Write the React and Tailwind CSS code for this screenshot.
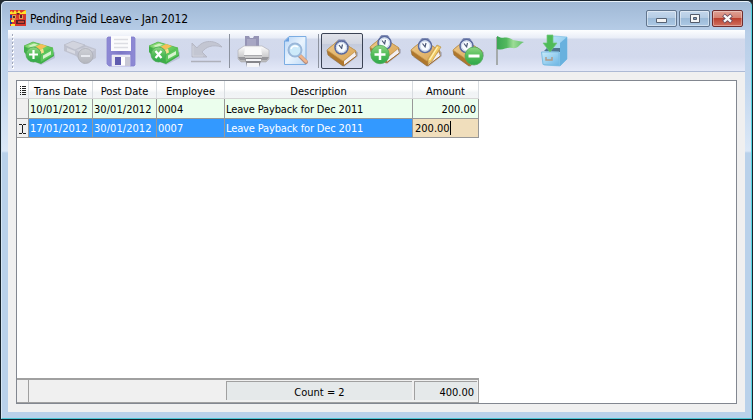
import React from "react";

function Defs() {
  return (
    <svg className="absolute h-0 w-0" aria-hidden="true">
      <defs>
        <linearGradient id="green" x1="0" y1="0" x2="1" y2="1">
          <stop offset="0" stopColor="#8ed87a" />
          <stop offset="0.5" stopColor="#74d468" />
          <stop offset="1" stopColor="#3fb544" />
        </linearGradient>
        <linearGradient id="orb" x1="0" y1="0" x2="0" y2="1">
          <stop offset="0" stopColor="#8fd684" />
          <stop offset="0.5" stopColor="#52bd58" />
          <stop offset="1" stopColor="#2ea84b" />
        </linearGradient>
        <linearGradient id="gold" x1="0" y1="0" x2="1" y2="1">
          <stop offset="0" stopColor="#efcb8c" />
          <stop offset="1" stopColor="#d9a455" />
        </linearGradient>
        <linearGradient id="grey" x1="0" y1="0" x2="0" y2="1">
          <stop offset="0" stopColor="#ced0d6" />
          <stop offset="1" stopColor="#b4b6bd" />
        </linearGradient>
        <linearGradient id="silver" x1="0" y1="0" x2="0" y2="1">
          <stop offset="0" stopColor="#ffffff" />
          <stop offset="1" stopColor="#b2b2b4" />
        </linearGradient>
        <linearGradient id="purple" x1="0" y1="0" x2="1" y2="0">
          <stop offset="0" stopColor="#8f8bd6" />
          <stop offset="0.5" stopColor="#7b77c6" />
          <stop offset="1" stopColor="#8f8bd6" />
        </linearGradient>
        <linearGradient id="blue" x1="0" y1="0" x2="1" y2="1">
          <stop offset="0" stopColor="#c9ecfb" />
          <stop offset="1" stopColor="#6cb5e4" />
        </linearGradient>
        <linearGradient id="page" x1="0" y1="0" x2="1" y2="1">
          <stop offset="0" stopColor="#b5d3f5" />
          <stop offset="0.5" stopColor="#eaf4fe" />
          <stop offset="1" stopColor="#bcd9f6" />
        </linearGradient>
        <linearGradient id="flag" x1="0" y1="0" x2="1" y2="0">
          <stop offset="0" stopColor="#3ba653" />
          <stop offset="0.35" stopColor="#52b85e" />
          <stop offset="0.6" stopColor="#9ddc96" />
          <stop offset="1" stopColor="#5fc06a" />
        </linearGradient>
      </defs>
    </svg>
  );
}

function Icon({ children }) {
  return (
    <svg width="36" height="36" viewBox="0 0 36 36" className="block shrink-0">
      {children}
    </svg>
  );
}

function Money({ mark }) {
  return (
    <Icon>
      <path d="M8 26l12 6 14-7v-6z" fill="#70789a" opacity=".25" />
      <path d="M3 13l9-4 20 6 1 8-13 8-9-3-8-9z" fill="#3fae48" />
      <path d="M3 13l9-4 20 6-13 7z" fill="url(#green)" stroke="#5cb653" strokeWidth=".7" />
      <path d="M7 13l6-2.500 4 1-6 3z" fill="#d2f2bf" />
      <path d="M14 14l6-3 6 2-7 4z" fill="#f5bf57" />
      <path d="M19 17l3-1.500 1 4-4 2z" fill="#f7df8b" />
      <path d="M19 22l13-7v7l-12 7z" fill="#5cc75c" />
      <path d="M22 22.500l8-4.500v3.500l-8 4.500z" fill="#d6f3cf" />
      <circle cx="12.500" cy="21.500" r="7.500" fill="url(#orb)" stroke="#4aa653" strokeWidth=".8" />
      {mark === "plus" ? (
        <path d="M12.500 17v9M8 21.500h9" stroke="#fff" strokeWidth="2.200" />
      ) : (
        <path d="M9.500 18l6 7M15.500 18l-6 7" stroke="#fff" strokeWidth="2.200" />
      )}
    </Icon>
  );
}

function MoneyDisabled() {
  return (
    <Icon>
      <path d="M2 12l9-4 12 4 11 4v9l-12 6-8-8-12-5z" fill="#bfc2cf" />
      <path d="M2 12l9-4 12 4-10 5z" fill="#d2d4de" stroke="#b4b7c4" strokeWidth=".6" />
      <path d="M5 15l8 3v3l-8-3z" fill="#d8dae3" />
      <path d="M14 17l10-3 9 3-10 5z" fill="#cfd1db" />
      <circle cx="23.500" cy="23" r="7.500" fill="url(#grey)" stroke="#abadb6" strokeWidth=".8" />
      <path d="M19 23h9" stroke="#e8eaf0" strokeWidth="2" />
    </Icon>
  );
}

function Save() {
  return (
    <Icon>
      <path d="M5 4h26l1 1v27l-1 1H6l-2-2V5z" fill="url(#purple)" stroke="#8580cd" strokeWidth=".8" />
      <path d="M8 3h20v15H8z" fill="#fbfbfd" />
      <path d="M11 6.500h14M11 10.500h14M11 14.500h14" stroke="#dcdde3" strokeWidth="1.300" />
      <path d="M9 22h18v11H9z" fill="#e9e9f1" stroke="#f1f0fb" strokeWidth=".6" />
      <path d="M12 24h6v8h-6z" fill="#5f5caf" />
      <path d="M18 24h4v8h-4z" fill="#fff" />
      <path d="M22 24h5v9h-5z" fill="#c8c8d5" />
    </Icon>
  );
}

function Undo() {
  return (
    <Icon>
      <path d="M4 10v14h15l-5-5c4-5 10-8 20-5C28 7 15 6 9 15z" fill="#c3c6d2" stroke="#b3b6c3" strokeWidth=".9" />
      <path d="M5 13v10h10" fill="none" stroke="#d0d2dc" />
      <path d="M3 28.500h30" stroke="#aeb0ba" strokeWidth="1.600" />
    </Icon>
  );
}

function Printer() {
  return (
    <Icon>
      <path d="M10 14V3h4l1 2h3l1-2h5v11z" fill="#9594b5" />
      <path d="M12 6h9v8h-9z" fill="#a8a7c4" />
      <path d="M3 17l6-4h18l7 4v9l-3 3H6l-3-3z" fill="url(#silver)" stroke="#b2b2b7" strokeWidth=".7" />
      <path d="M10 15h16l1 7H9z" fill="#fafafa" />
      <path d="M9 22.500h18" stroke="#a9a9ad" strokeWidth="1" />
      <path d="M3 24h7v3H5zM27 24h7l-2 3h-5z" fill="#97979c" />
      <path d="M10 25h17l-3 9H12z" fill="#85858a" />
      <path d="M11 26h15v2H11zM12 30h12v4H12z" fill="#f4f4f7" />
    </Icon>
  );
}

function Preview() {
  return (
    <Icon>
      <path d="M12 3.500h17v28H7.500V8z" fill="url(#page)" stroke="#7badE3" />
      <path d="M12 4v4.500H7.500z" fill="#6ba0df" />
      <path d="M23 23l6 6" stroke="#b08b80" strokeWidth="4" strokeLinecap="round" />
      <path d="M23 22.500l6 6" stroke="#f0b58c" strokeWidth="2.500" strokeLinecap="round" />
      <circle cx="18" cy="17" r="6.500" fill="#cdeafa" stroke="#9ab7d9" strokeWidth="2" />
      <path d="M14 16c1-3 4-4 7-2" fill="none" stroke="#fff" strokeWidth="1.500" />
    </Icon>
  );
}

function Watch({ x, y }) {
  return (
    <g transform={`translate(${x} ${y})`}>
      <path d="M-5-6l2-2h6l2 2z" fill="#8591b8" />
      <circle r="6.500" fill="#eef4fc" stroke="#5b6b9f" strokeWidth="1.600" />
      <circle r="5" fill="#f8fcff" stroke="#b7c8e0" strokeWidth=".8" />
      <path d="M-2.500-2.500L.5 1.500M0 1l1-4" fill="none" stroke="#4b5876" strokeWidth="1.200" />
    </g>
  );
}

const watchPlace = {
  plus: [17.5, 10],
  edit: [17, 13],
  minus: [16.5, 13],
};

function Book({ mark }) {
  const [x, y] = watchPlace[mark] || [17.5, 14.5];
  const lift = mark === "plus" ? -3 : 0;
  return (
    <Icon>
      <g transform={`translate(0 ${lift})`}>
        <path d="M5 24l15 10 14-11v-4z" fill="#6a6570" opacity=".3" />
        <path d="M3 17L15 7l17 11v5L19 33 4 22z" fill="#b0772c" stroke="#94703b" strokeWidth=".7" />
        <path d="M3 17L15 7l17 11-13 10z" fill="url(#gold)" stroke="#c79c55" strokeWidth=".8" />
        <path d="M20 28l11-9 1 4-12 9z" fill="#f3eff3" />
        <path d="M20 32.500l12.500-9.500" stroke="#a66d2a" strokeWidth="1" />
      </g>
      <Watch x={x} y={y} />
      {mark === "edit" && (
        <g>
          <path d="M29 12l4 2-9 14-4 3v-5z" fill="#f2ca66" stroke="#b6914a" strokeWidth=".7" />
          <path d="M29.500 14L21.500 27" stroke="#fff3bb" strokeWidth="1.300" />
        </g>
      )}
      {mark === "plus" && (
        <g>
          <circle cx="13" cy="21.500" r="9.200" fill="url(#orb)" stroke="#4faa5c" strokeWidth=".8" />
          <path d="M13 16v11M7.500 21.500h11" stroke="#fff" strokeWidth="2.500" />
        </g>
      )}
      {mark === "minus" && (
        <g>
          <circle cx="24" cy="23" r="9" fill="url(#orb)" stroke="#4faa5c" strokeWidth=".8" />
          <path d="M18.500 23h11" stroke="#fff" strokeWidth="3" />
        </g>
      )}
    </Icon>
  );
}

function Flag() {
  return (
    <Icon>
      <path d="M6 4v28" stroke="#a5aaab" strokeWidth="2" />
      <path d="M6 3c7 4 9-1 16 4l11 2c-5 2-5 7-12 6-6-1-9 3-15 1z" fill="url(#flag)" />
    </Icon>
  );
}

function Drawer() {
  return (
    <Icon>
      <path d="M13 7l6-4 13 1v22l-7 7-16-1z" fill="url(#blue)" stroke="#76bce2" strokeWidth=".6" />
      <path d="M25 10l7-6v22l-7 7z" fill="#68b1de" />
      <path d="M14 8h11v12H14z" fill="#a9d8ef" />
      <path d="M9 18l3-3h13v4z" fill="#4f7590" />
      <path d="M6.500 19H24v13.500l-16-1z" fill="url(#blue)" stroke="#7cbde3" />
      <path d="M11 24v3h6v-3" fill="none" stroke="#b09a88" strokeWidth="1.500" />
      <path d="M12 2h6v8h4l-7 9-7-9h4z" fill="#4fbb58" stroke="#74c97e" strokeWidth=".7" />
    </Icon>
  );
}

function Logo() {
  return (
    <svg width="16" height="16" viewBox="0 0 16 16" className="block">
      <path d="M0 0h16v16H0z" fill="#d8362a" />
      <path d="M0 5h3v3H0zM0 10h2v4H0z" fill="#233e99" />
      <path d="M0 2l2-1 1 2 2-3 2 3 2-3 2 3 3-2 2-1v4H0z" fill="#ffe52a" />
      <path d="M2 5h4v5H2zM9 5h4v4H9z" fill="#e0a04c" />
      <path d="M3 6h2v2H3zM10 5h2v3h-2zM6 3l2 2 2-2M6 10h9v4H6z" fill="#5a2026" />
      <path d="M1 10h3v2H1zM1 14h4v2H1z" fill="#ffe73f" />
      <path d="M5 9h3M8 12h6" stroke="#e8503c" strokeWidth="1.500" />
    </svg>
  );
}

const windowButton =
  "box-border flex h-[17px] w-[31px] items-center justify-center rounded-[2px] border border-[#61758e] bg-[linear-gradient(#c4d7ec_0%,#b5cce4_45%,#9ab9d7_46%,#adc9e5_100%)] shadow-[inset_0_0_0_1px_#ffffff70]";

function TitleBar() {
  return (
    <div className="flex h-7 shrink-0 items-start px-[2px]">
      <div className="mt-2"><Logo /></div>
      <div className="ml-1 mt-[9px] h-4 w-[170px] text-[12px] leading-4 tracking-[-0.17px]">Pending Paid Leave - Jan 2012</div>
      <div className="ml-auto mt-2 flex gap-[2px]">
        <div className={windowButton}>
          <svg width="13" height="11"><path d="M1.500 5.500h10v4h-10z" fill="#f3f3f3" stroke="#566273" /></svg>
        </div>
        <div className={windowButton}>
          <svg width="12" height="10"><path d="M1.500.500h9v8h-9z" fill="#f5f6f7" stroke="#535b6b" /><path d="M4.500 3.500h3v2h-3z" fill="#7c9bbd" stroke="#535b6b" /></svg>
        </div>
        <div className="flex h-[17px] w-[31px] items-center justify-center rounded-[2px] border border-[#702c2d] bg-[linear-gradient(#dfa196_0%,#d58272_45%,#b93d2c_46%,#d0705f_100%)] shadow-[inset_0_0_0_1px_#ffffff55]">
          <svg width="13" height="11"><path d="M2.500 2l8 7M10.500 2l-8 7" stroke="#68485b" strokeWidth="4" /><path d="M3 2.300l7 6.400M10 2.300L3 8.700" stroke="#fafafa" strokeWidth="2.300" /></svg>
        </div>
      </div>
    </div>
  );
}

function Toolbar() {
  return (
    <div className="flex h-[42px] shrink-0 items-start border-b border-[#adbad5] bg-[linear-gradient(#fdfeff_0px,#e9edf7_8px,#d3daec_9px,#d2d9ed_27px,#e4e9f8_41px)]">
      <svg width="8" height="41" className="shrink-0">
        {[5, 9, 13, 17, 21, 25, 29, 33, 37].map((y) => (
          <g key={y}><path d={`M4 ${y}h2v2h-2z`} fill="#fff" /><path d={`M4 ${y - 1}h1v2H4z`} fill="#a2a9bb" /></g>
        ))}
      </svg>
      <div className="ml-[5px] mt-[3px]"><Money mark="plus" /></div>
      <div className="ml-[5px] mt-[3px]"><MoneyDisabled /></div>
      <div className="ml-[5px] mt-[3px]"><Save /></div>
      <div className="ml-[7px] mt-[3px]"><Money mark="x" /></div>
      <div className="ml-[6px] mt-[3px]"><Undo /></div>
      <div className="ml-[5px] mt-[4px] h-[34px] w-px bg-[#8c929f]" />
      <div className="ml-[5px] mt-[3px]"><Printer /></div>
      <div className="ml-[6px] mt-[3px]"><Preview /></div>
      <div className="ml-[5px] mt-[4px] h-[34px] w-px bg-[#8c929f]" />
      <div className="ml-[2px] mt-[3px] flex h-[36px] w-[42px] items-center justify-center rounded-[2px] border border-[#3b4354] bg-[linear-gradient(#e1e3ea_0,#d2d6e1_28%,#c4cbdc_30%,#d9def0)]"><Book /></div>
      <div className="ml-[4px] mt-[3px]"><Book mark="plus" /></div>
      <div className="ml-[5px] mt-[3px]"><Book mark="edit" /></div>
      <div className="ml-[6px] mt-[3px]"><Book mark="minus" /></div>
      <div className="ml-[5px] mt-[3px]"><Flag /></div>
      <div className="ml-[8px] mt-[3px]"><Drawer /></div>
    </div>
  );
}

const columns = "grid shrink-0 grid-cols-[12px_64px_64px_68px_188px_66px] grid-rows-[100%]";
const headerCell = "border-r border-b border-r-[#d8dce0] border-b-[#d5d5d5] text-center";
const cell = "border-b border-r border-[#989898]";

function DataGrid() {
  return (
    <div className="mx-2 mt-2 flex h-[324px] flex-col border border-[#828790] bg-white text-[11px]">
      <div className={`${columns} h-[18px] w-[462px] bg-[linear-gradient(#fff_0_45%,#f0f3f5_65%,#f3f4f6)] leading-[21px]`}>
        <div className={headerCell}>
          <svg width="11" height="17" className="block"><path d="M3 5.500h1M5 5.500h4M3 7.500h1M5 7.500h4M3 9.500h1M5 9.500h4M3 11.500h1M5 11.500h4M3 13.500h1M5 13.500h4" stroke="#222" strokeWidth="1" /></svg>
        </div>
        <div className={headerCell}>Trans Date</div>
        <div className={headerCell}>Post Date</div>
        <div className={headerCell}>Employee</div>
        <div className={headerCell}>Description</div>
        <div className={headerCell}>Amount</div>
      </div>
      <div className={`${columns} h-5 w-[462px] bg-[#ebfeed] leading-[21px]`}>
        <div className={`${cell} bg-[#f0f0f0]`} />
        <div className={`${cell} pl-px tracking-[0.05px]`}>10/01/2012</div>
        <div className={`${cell} pl-px tracking-[0.05px]`}>30/01/2012</div>
        <div className={`${cell} pl-px`}>0004</div>
        <div className={`${cell} pl-px tracking-[-0.14px]`}>Leave Payback for Dec 2011</div>
        <div className={`${cell} pr-[2px] text-right`}>200.00</div>
      </div>
      <div className={`${columns} h-[19px] w-[462px] bg-[#3399ff] leading-[19px] text-white`}>
        <div className={`${cell} bg-[#f0f0f0]`}>
          <svg width="10" height="18" className="block"><path d="M2 5.500h3M6 5.500h3M5.500 6v8M2 14.500h3M6 14.500h3" stroke="#222" /></svg>
        </div>
        <div className={`${cell} pl-px tracking-[0.05px]`}>17/01/2012</div>
        <div className={`${cell} pl-px tracking-[0.05px]`}>30/01/2012</div>
        <div className={`${cell} pl-px`}>0007</div>
        <div className={`${cell} pl-px tracking-[-0.14px]`}>Leave Payback for Dec 2011</div>
        <div className={`${cell} flex items-center bg-[#f0debc] pl-[2px] text-black`}>200.00<span className="h-[14px] w-px bg-black" /></div>
      </div>
      <div className="flex-1" />
      <div className="flex h-[25px] w-[462px] shrink-0 border-b border-r border-t-2 border-[#a0a0a0] bg-[#f0f0f0]">
        <div className="w-3 border-r border-[#a0a0a0]" />
        <div className="w-[197px]" />
        <div className="mt-px h-[19px] w-[186px] border-l border-t border-[#a0a0a0] bg-[#e5e9ea] text-center leading-[21px]">Count = 2</div>
        <div className="ml-[2px] mt-px h-[19px] w-[63px] border-l border-t border-[#a0a0a0] bg-[#e5e9ea] pr-[3px] text-right leading-[21px]">400.00</div>
      </div>
    </div>
  );
}

export default function App() {
  return (
    <div className="h-[420px] w-[753px] overflow-hidden bg-[#222b31] font-['DejaVu_Sans_Condensed','DejaVu_Sans',sans-serif] text-black [font-stretch:condensed]">
      <Defs />
      <div className="flex h-[420px] w-[753px] flex-col overflow-hidden rounded-t-[6px] border border-[#17232c] bg-[linear-gradient(#9fb8d5_0,#b8cee8_32px,#c3d7ee_85px,#dbe8f7_150px,#b9d1ea_152px,#b9d1ea_100%)]">
        <div className="flex h-[418px] flex-col rounded-t-[5px] border border-b-[#4cc6d5] border-l-[#d5e6f4] border-r-[#52d5e0] border-t-[#e8f2fa] px-[6px]">
          <TitleBar />
          <div className="flex h-[382px] flex-col bg-[#f0f0f0]">
            <Toolbar />
            <DataGrid />
          </div>
        </div>
      </div>
    </div>
  );
}
